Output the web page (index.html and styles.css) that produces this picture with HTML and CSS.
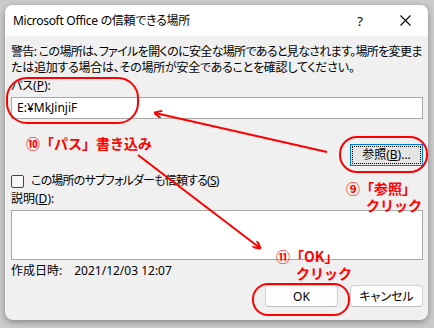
FILE: index.html
```html
<!DOCTYPE html>
<html lang="ja">
<head>
    <meta charset="UTF-8">
    <title>Microsoft Office の信頼できる場所</title>
    <link rel="stylesheet" href="styles.css">
</head>
<body>
    <div class="dialog">
        <div class="titlebar">
            <span class="title">Microsoft Office の信頼できる場所</span>
            <span class="help">?</span>
            <span class="close">
                <svg width="11" height="11" viewBox="0 0 11 11"><path d="M0.5 0.5 L10.5 10.5 M10.5 0.5 L0.5 10.5" stroke="#000" stroke-width="1.1" fill="none"/></svg>
            </span>
        </div>
        <div class="content">
            <p class="warning"><span class="line1">警告: この場所は、ファイルを開くのに安全な場所であると見なされます。場所を変更ま</span><br><span class="line2">たは追加する場合は、その場所が安全であることを確認してください。</span></p>
            <div class="field-label">パス(<u>P</u>):</div>
            <div class="textbox">E:¥MkJinjiF</div>
            <div class="browse-row">
                <button class="btn-browse"><span class="focus">参照(<u>B</u>)...</span></button>
            </div>
            <div class="check-row"><span class="checkbox"></span><span class="check-text">この場所のサブフォルダーも信頼する(<u>S</u>)</span></div>
            <div class="field-label">説明(<u>D</u>):</div>
            <div class="textarea"></div>
            <div class="created">作成日時:<span class="date">2021/12/03 12:07</span></div>
            <div class="actions">
                <button class="btn">OK</button>
                <button class="btn">キャンセル</button>
            </div>
        </div>
    </div>

    <!-- red callouts drawn over the dialog -->
    <svg class="marks" width="434" height="328" viewBox="0 0 434 328">
        <defs>
            <marker id="head" markerWidth="8" markerHeight="8" refX="7" refY="4" orient="auto" markerUnits="userSpaceOnUse">
                <path d="M0 0 L8 4 L0 8" fill="none" stroke="#f00" stroke-width="2"/>
            </marker>
        </defs>
        <rect x="7" y="78" width="131" height="45" rx="20" fill="none" stroke="#f00" stroke-width="2"/>
        <rect x="340" y="137" width="87" height="35" rx="17" fill="none" stroke="#f00" stroke-width="2"/>
        <rect x="253" y="284" width="96" height="31" rx="15" fill="none" stroke="#f00" stroke-width="2"/>
        <line x1="327" y1="152" x2="155" y2="113" stroke="#f00" stroke-width="2" marker-end="url(#head)"/>
        <line x1="138" y1="155" x2="260" y2="248" stroke="#f00" stroke-width="2" marker-end="url(#head)"/>
    </svg>
    <div class="note note-path">⑩「パス」書き込み</div>
    <div class="note note-browse"><span class="row">⑨「参照」</span><span class="row sub">クリック</span></div>
    <div class="note note-ok"><span class="row">⑪「OK」</span><span class="row sub">クリック</span></div>
</body>
</html>
```

FILE: styles.css
```css
body { margin: 0; width: 434px; height: 328px; position: relative; overflow: hidden; background: #cbcbcb; font-family: "Noto Sans", "Noto Sans CJK JP", sans-serif; font-size: 12px; color: #000; font-feature-settings: "palt"; }
.dialog { margin: 5px; width: 423px; height: 315px; background: #f0f0f0; border-radius: 8px; overflow: hidden; box-shadow: 0 2px 6px rgba(0,0,0,0.35); }
.titlebar { height: 31px; background: #fff; display: flex; align-items: center; padding-left: 8px; }
.title { font-size: 12px; line-height: 16px; letter-spacing: -0.3px; }
.help { margin-left: auto; font-size: 13px; line-height: 16px; }
.close { margin: 0 17px 0 37px; display: flex; }
.content { padding: 8px 5px 0 6px; }
.warning { margin: 0; line-height: 16px; white-space: nowrap; }
.warning .line1 { letter-spacing: -0.65px; }
.warning .line2 { letter-spacing: -0.25px; }
.field-label { margin-top: 2px; line-height: 16px; }
.textbox { margin-top: 3px; height: 20px; background: #fff; border: 1px solid #a8a8a8; padding-left: 5px; line-height: 20px; }
.browse-row { margin-top: 25px; display: flex; justify-content: flex-end; }
.btn-browse { width: 73px; height: 22px; padding: 1px; background: #e5e5e5; border: 1px solid #0078d7; font: inherit; color: #000; }
.btn-browse .focus { display: block; height: 16px; line-height: 16px; border: 1px dotted #000; }
.check-row { margin-top: 7px; display: flex; align-items: center; line-height: 16px; }
.check-text { letter-spacing: -0.8px; }
.checkbox { width: 11px; height: 11px; border: 1px solid #444; border-radius: 2px; margin-right: 7px; background: #f7f7f7; }
.textarea { margin-top: 3px; height: 48px; background: #fff; border: 1px solid #a8a8a8; }
.created { margin-top: 3px; line-height: 16px; }
.created .date { margin-left: 12px; }
.actions { margin-top: 6px; display: flex; justify-content: flex-end; gap: 12px; }
.btn { width: 73px; height: 22px; background: #fdfdfd; border: 1px solid #d0d0d0; border-bottom-color: #bdbdbd; border-radius: 4px; font: inherit; color: #000; padding: 0; }
.marks { position: absolute; left: 0; top: 0; }
.note { position: absolute; color: #f00; font-family: "Noto Sans CJK JP", sans-serif; font-weight: bold; font-size: 14px; line-height: 16px; font-feature-settings: normal; white-space: nowrap; }
.note .row { display: block; }
.note .sub { margin: 1px 0 0 20px; }
.note-path { left: 26px; top: 135px; }
.note-browse { left: 346px; top: 180px; }
.note-ok { left: 276px; top: 248px; }
```
